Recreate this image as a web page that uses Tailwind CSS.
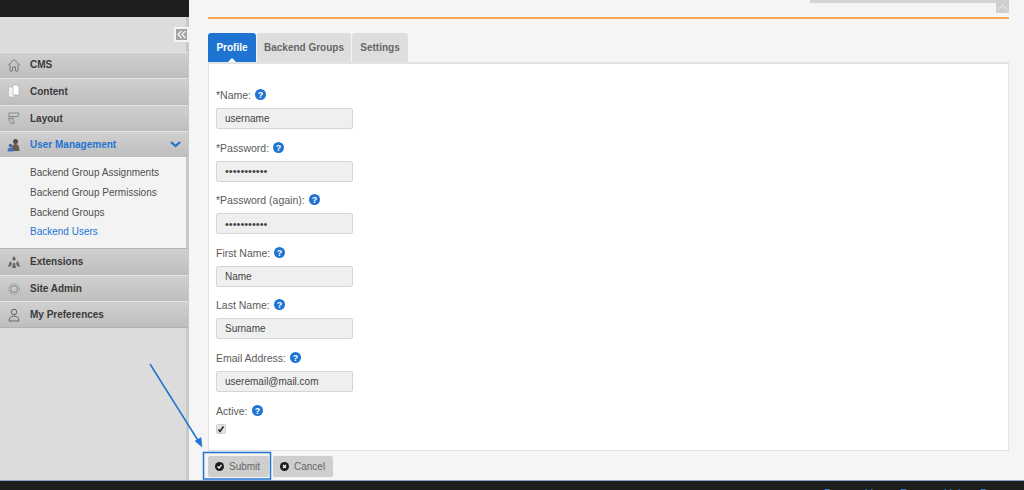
<!DOCTYPE html>
<html lang="en">
<head>
  <meta charset="UTF-8" />
  <title>Backend Users</title>
  <script src="https://cdn.jsdelivr.net/npm/@tailwindcss/browser@4"></script>
</head>
<body class="relative w-[1024px] h-[490px] overflow-hidden bg-[#f5f5f5] font-['Liberation_Sans',Arial,sans-serif] text-[10px] text-[#4a4a4a]">

  <div class="flex flex-col h-[490px]">
    <div class="flex h-[480px]">
      <!-- sidebar -->
      <aside class="w-[189px] shrink-0 flex flex-col">
        <div class="h-[17px] bg-[#1e1e1e]"></div>
        <div class="flex-1 bg-[#dcdcdc] border-r-[3px] border-[#c9c9c9]">
          <div class="flex justify-end items-start h-[35px] pt-[10px] -mr-[3px]">
            <div class="w-[15px] h-[15px] bg-[#f4f4f4] p-[2px]">
              <div class="flex items-center justify-center w-[11px] h-[11px] bg-[#a3a3a3]">
                <svg width="9" height="9" viewBox="0 0 9 9" fill="none" stroke="#f4f4f4" stroke-width="1.200"><path d="M4.500 1 1 4.500 4.500 8M8.500 1 5 4.500 8.500 8"/></svg>
              </div>
            </div>
          </div>

          <nav class="font-bold text-[#3a3a3a] -mr-[2px]">
            <div class="flex items-center h-[26px] pl-[7px] gap-[9px] pb-[2px] bg-gradient-to-b from-[#d0d0d0] to-[#bebebe] border-t border-[#e4e4e4]">
              <svg width="14" height="14" viewBox="0 0 14 14" fill="none" stroke="#777" stroke-width="1"><path d="M1 7.500 7 1.500l6 6M3 6.500V13h2.500V9h3v4H11V6.500"/></svg>
              <span>CMS</span>
            </div>
            <div class="flex items-center h-[27px] pl-[7px] gap-[9px] pb-[2px] bg-gradient-to-b from-[#d0d0d0] to-[#bebebe] border-t border-[#e4e4e4]">
              <svg width="14" height="14" viewBox="0 0 14 14"><path d="M1.500 3h6v10h-6z" fill="#f3f3f3" stroke="#aaa" stroke-width=".5"/><path d="M6 1h4l2 2v8H6z" fill="#fff" stroke="#999" stroke-width=".5"/></svg>
              <span>Content</span>
            </div>
            <div class="flex items-center h-[26px] pl-[7px] gap-[9px] pb-[1px] bg-gradient-to-b from-[#d0d0d0] to-[#bebebe] border-t border-[#e4e4e4]">
              <svg width="14" height="14" viewBox="0 0 14 14" fill="none" stroke="#888" stroke-width="1"><path d="M2 2h10l-1 3.500H6V9l1 3.500H4.500L2 9z"/><path d="M6 5.500H2M2 7.500h4"/></svg>
              <span>Layout</span>
            </div>
            <div class="flex items-center h-[26px] pl-[7px] gap-[9px] pr-[7px] bg-gradient-to-b from-[#d0d0d0] to-[#bebebe] border-t border-[#e4e4e4]">
              <svg width="14" height="14" viewBox="0 0 14 14"><circle cx="8.500" cy="3.500" r="2.500" fill="#5a4a44"/><path d="M4.500 13c0-4.500 1.500-7 4-7s4 2.500 4 7z" fill="#6b5a50"/><circle cx="3.500" cy="7.500" r="1.800" fill="#4a6a9a"/><path d="M.5 13.500c0-2.500 1-4 3-4s3 1.500 3 4z" fill="#3f76c0"/></svg>
              <span class="text-[#1f74d2]">User Management</span>
              <svg class="ml-auto" width="11" height="7" viewBox="0 0 11 7" fill="none" stroke="#1f74d2" stroke-width="2.200"><path d="M1 1l4.500 4L10 1"/></svg>
            </div>
            <div class="h-[91px] bg-[#f3f3f3] border-r-[2px] border-[#c9c9c9] pl-[30px] pt-[6px] font-normal text-[#4f4f4f]">
              <div class="h-[19.700px] flex items-center">Backend Group Assignments</div>
              <div class="h-[19.700px] flex items-center">Backend Group Permissions</div>
              <div class="h-[19.700px] flex items-center">Backend Groups</div>
              <div class="h-[19.700px] flex items-center text-[#1f74d2]">Backend Users</div>
            </div>
            <div class="flex items-center h-[27px] pl-[7px] gap-[9px] pb-[1px] bg-gradient-to-b from-[#d0d0d0] to-[#bebebe] border-t border-[#b5b5b5]">
              <svg width="14" height="14" viewBox="0 0 14 14" fill="#666"><path d="M7 1l2 3-2 2-2-2zM3 6l2 2-1 3-3 1zM11 6l2 6-3-1-1-3zM6 8h2l1 5H5z"/></svg>
              <span>Extensions</span>
            </div>
            <div class="flex items-center h-[26px] pl-[7px] gap-[9px] bg-gradient-to-b from-[#d0d0d0] to-[#bebebe] border-t border-[#e4e4e4]">
              <svg width="14" height="14" viewBox="0 0 14 14" fill="none" stroke="#999" stroke-width="1.500"><circle cx="7" cy="7" r="3.500"/><circle cx="7" cy="7" r="5.500" stroke-width="1" stroke-dasharray="2 1.500"/></svg>
              <span>Site Admin</span>
            </div>
            <div class="flex items-center h-[27px] pl-[7px] gap-[9px] bg-gradient-to-b from-[#d0d0d0] to-[#bebebe] border-t border-[#e4e4e4] border-b border-b-[#b0b0b0]">
              <svg width="14" height="14" viewBox="0 0 14 14" fill="none" stroke="#666" stroke-width="1"><circle cx="7" cy="4" r="2.700"/><path d="M2 13c0-3 2-5 5-5s5 2 5 5z"/></svg>
              <span>My Preferences</span>
            </div>
          </nav>
        </div>
      </aside>

      <!-- main -->
      <main class="flex-1 flex flex-col pt-[17px] pl-[19px] pr-[15px]">
        <div class="h-[2px] w-full shrink-0 bg-[#f7a84f]"></div>

        <!-- tabs -->
        <div class="flex gap-px mt-[14px] h-[29px] font-bold text-[#666]">
          <div class="relative flex items-center justify-center w-[48px] bg-[#1f74d2] text-white rounded-t-[3px]">
            Profile
            <span class="absolute bottom-0 left-1/2 -ml-[4px] border-x-[4px] border-b-[4px] border-x-transparent border-b-white"></span>
          </div>
          <div class="flex items-center justify-center w-[94px] bg-[#dedede] rounded-t-[3px]">Backend Groups</div>
          <div class="flex items-center justify-center w-[56px] bg-[#dedede] rounded-t-[3px]">Settings</div>
        </div>

        <!-- form panel -->
        <div class="h-[389px] bg-white border-t-2 border-x border-b border-[#e2e2e2] pl-[7px] pt-[25px] text-[#5a5a5a] text-[10.500px]">
          <div class="h-[52.600px]">
            <div class="flex items-start gap-[4px] h-[19px]"><span class="leading-[13px]">*Name:</span><svg width="11" height="11" viewBox="0 0 11 11"><circle cx="5.500" cy="5.500" r="5.500" fill="#1f74d2"/><text x="5.500" y="8.700" text-anchor="middle" font-size="9" font-weight="700" fill="#fff">?</text></svg></div>
            <input class="block w-[137px] h-[21px] px-[8px] rounded-[2px] border border-[#d5d5d5] bg-[#efefef] text-[#444] text-[10px]" value="username" />
          </div>
          <div class="h-[52.600px]">
            <div class="flex items-start gap-[4px] h-[19px]"><span class="leading-[13px]">*Password:</span><svg width="11" height="11" viewBox="0 0 11 11"><circle cx="5.500" cy="5.500" r="5.500" fill="#1f74d2"/><text x="5.500" y="8.700" text-anchor="middle" font-size="9" font-weight="700" fill="#fff">?</text></svg></div>
            <input type="password" class="block w-[137px] h-[21px] px-[8px] rounded-[2px] border border-[#d5d5d5] bg-[#efefef] text-[#444] text-[11px]" value="password123" />
          </div>
          <div class="h-[52.600px]">
            <div class="flex items-start gap-[4px] h-[19px]"><span class="leading-[13px]">*Password (again):</span><svg width="11" height="11" viewBox="0 0 11 11"><circle cx="5.500" cy="5.500" r="5.500" fill="#1f74d2"/><text x="5.500" y="8.700" text-anchor="middle" font-size="9" font-weight="700" fill="#fff">?</text></svg></div>
            <input type="password" class="block w-[137px] h-[21px] px-[8px] rounded-[2px] border border-[#d5d5d5] bg-[#efefef] text-[#444] text-[11px]" value="password123" />
          </div>
          <div class="h-[52.600px]">
            <div class="flex items-start gap-[4px] h-[19px]"><span class="leading-[13px]">First Name:</span><svg width="11" height="11" viewBox="0 0 11 11"><circle cx="5.500" cy="5.500" r="5.500" fill="#1f74d2"/><text x="5.500" y="8.700" text-anchor="middle" font-size="9" font-weight="700" fill="#fff">?</text></svg></div>
            <input class="block w-[137px] h-[21px] px-[8px] rounded-[2px] border border-[#d5d5d5] bg-[#efefef] text-[#444] text-[10px]" value="Name" />
          </div>
          <div class="h-[52.600px]">
            <div class="flex items-start gap-[4px] h-[19px]"><span class="leading-[13px]">Last Name:</span><svg width="11" height="11" viewBox="0 0 11 11"><circle cx="5.500" cy="5.500" r="5.500" fill="#1f74d2"/><text x="5.500" y="8.700" text-anchor="middle" font-size="9" font-weight="700" fill="#fff">?</text></svg></div>
            <input class="block w-[137px] h-[21px] px-[8px] rounded-[2px] border border-[#d5d5d5] bg-[#efefef] text-[#444] text-[10px]" value="Surname" />
          </div>
          <div class="h-[52.600px]">
            <div class="flex items-start gap-[4px] h-[19px]"><span class="leading-[13px]">Email Address:</span><svg width="11" height="11" viewBox="0 0 11 11"><circle cx="5.500" cy="5.500" r="5.500" fill="#1f74d2"/><text x="5.500" y="8.700" text-anchor="middle" font-size="9" font-weight="700" fill="#fff">?</text></svg></div>
            <input class="block w-[137px] h-[21px] px-[8px] rounded-[2px] border border-[#d5d5d5] bg-[#efefef] text-[#444] text-[10px]" value="useremail@mail.com" />
          </div>
          <div>
            <div class="flex items-start gap-[4px] h-[19px]"><span class="leading-[13px]">Active:</span><svg width="11" height="11" viewBox="0 0 11 11"><circle cx="5.500" cy="5.500" r="5.500" fill="#1f74d2"/><text x="5.500" y="8.700" text-anchor="middle" font-size="9" font-weight="700" fill="#fff">?</text></svg></div>
            <div class="flex items-center justify-center w-[10px] h-[10px] rounded-[2px] bg-[#e4e4e4] border border-[#cfcfcf]">
              <svg width="8" height="8" viewBox="0 0 8 8" fill="none" stroke="#222" stroke-width="1.500"><path d="M1.500 4.500 3 6.500 6.500 1.500"/></svg>
            </div>
          </div>
        </div>

        <!-- buttons -->
        <div class="flex gap-[4px] mt-[5px] text-[#666]">
          <button class="flex items-center gap-[5px] w-[61px] h-[21px] pl-[7px] rounded-[2px] bg-[#cfcfcf]">
            <svg width="9" height="9" viewBox="0 0 9 9"><circle cx="4.500" cy="4.500" r="4.500" fill="#1c1c1c"/><path d="M2.500 4.500 4 6l2.500-3" fill="none" stroke="#fff" stroke-width="1.200"/></svg>
            Submit
          </button>
          <button class="flex items-center gap-[5px] w-[60px] h-[21px] pl-[7px] rounded-[2px] bg-[#cfcfcf]">
            <svg width="9" height="9" viewBox="0 0 9 9"><circle cx="4.500" cy="4.500" r="4.500" fill="#1c1c1c"/><path d="M3 3l3 3M6 3 3 6" fill="none" stroke="#fff" stroke-width="1.200"/></svg>
            Cancel
          </button>
        </div>
      </main>
    </div>

    <!-- footer bar -->
    <div class="h-[10px] w-full bg-[#1e1e1e] border-t border-[#8fa4c4] overflow-hidden">
      <div class="flex pl-[824px] pt-[6px] text-[11px] leading-[12px] text-[#3f86d8]">
        <span class="w-[76px] shrink-0">Powered by</span><span class="w-[44px] shrink-0">Forums</span><span class="w-[36px] shrink-0">Help</span><span class="shrink-0">Docs</span>
      </div>
    </div>
  </div>

  <!-- top right scroll widget -->
  <div class="absolute top-0 left-[810px] w-[199px] h-[3px] bg-[#d4d4d4]"></div>
  <div class="absolute top-0 left-[996px] flex items-center justify-center w-[13px] h-[13px] bg-[#d0d0d0]">
    <svg width="11" height="6" viewBox="0 0 11 6" fill="none" stroke="#eee" stroke-width="1"><path d="M1 5.500 5.500 1 10 5.500"/></svg>
  </div>

  <!-- annotation overlay -->
  <svg class="absolute left-0 top-0 pointer-events-none" width="1024" height="490" fill="none">
    <path d="M150 364 199 442" stroke="#1f74d2" stroke-width="1.500"/>
    <path d="M202 447 195 441 201 437.500z" fill="#1f74d2" stroke="#1f74d2" stroke-width=".5"/>
    <rect x="203.500" y="452.500" width="67" height="26.500" stroke="#1f74d2" stroke-width="1.500"/>
  </svg>
</body>
</html>
